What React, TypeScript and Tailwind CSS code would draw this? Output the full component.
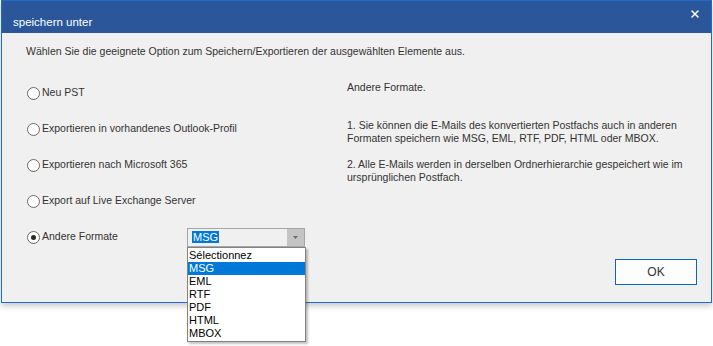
import { X } from 'lucide-react'

const options = [
  { label: 'Neu PST', checked: false },
  { label: 'Exportieren in vorhandenes Outlook-Profil', checked: false },
  { label: 'Exportieren nach Microsoft 365', checked: false },
  { label: 'Export auf Live Exchange Server', checked: false },
]

const formats = ['Sélectionnez', 'MSG', 'EML', 'RTF', 'PDF', 'HTML', 'MBOX']

function Radio({ checked }: { checked: boolean }) {
  return (
    <span className="flex h-[13px] w-[13px] shrink-0 items-center justify-center rounded-full border border-[#6a6a6a] bg-white">
      {checked && <span className="h-[5px] w-[5px] rounded-full bg-[#2a2a2a]" />}
    </span>
  )
}

function RadioRow({ label, checked }: { label: string; checked: boolean }) {
  return (
    <div className="flex h-[36px] items-center gap-[2px]">
      <Radio checked={checked} />
      <span>{label}</span>
    </div>
  )
}

function FormatCombo() {
  return (
    <div className="relative">
      {/* Closed combo */}
      <div className="flex h-[19px] w-[118px] items-center border border-[#a6a6a6] bg-[#f0f0f0]">
        <div className="flex-1 pl-[4px] text-[11px]">
          <span className="bg-[#0078d7] px-px text-white">MSG</span>
        </div>
        <div className="flex h-[17px] w-[17px] items-center justify-center bg-[#c4c4c4]">
          <svg width="5" height="3" viewBox="0 0 5 3">
            <path d="M0 0 L5 0 L2.5 3 Z" fill="#6a6a6a" />
          </svg>
        </div>
      </div>

      {/* Open list */}
      <div className="absolute left-0 top-full z-10 w-[119px] border border-[#828282] bg-white py-px shadow-[2px_2px_2px_rgba(0,0,0,0.25)]">
        {formats.map((f) => (
          <div
            key={f}
            className={
              f === 'MSG'
                ? 'h-[13px] bg-[#0078d7] pl-[1px] text-[11px] leading-[13px] text-white'
                : 'h-[13px] pl-[1px] text-[11px] leading-[13px] text-black'
            }
          >
            {f}
          </div>
        ))}
      </div>
    </div>
  )
}

export default function App() {
  return (
    <div className="h-[346px] w-[713px] bg-white font-['Liberation_Sans',Arial,sans-serif] text-[10.5px] text-[#333333]">
      <div className="ml-px flex h-[303px] w-[711px] flex-col border border-[#1f6bc9] bg-[#f0f0f0] shadow-[0_3px_6px_rgba(0,0,0,0.22)]">
        {/* Title bar */}
        <div className="flex h-[32px] items-start justify-between bg-[#2b579a] pl-[11px] pr-[10px]">
          <span className="pt-[14px] text-[11.5px] leading-[14px] text-white">speichern unter</span>
          <X className="mt-[7px] h-[12px] w-[12px] text-white" strokeWidth={3} />
        </div>

        {/* Body */}
        <div className="flex flex-1 flex-col">
          <p className="mt-[11px] pl-[24px] leading-[14px]">
            Wählen Sie die geeignete Option zum Speichern/Exportieren der ausgewählten Elemente aus.
          </p>

          <div className="mt-[17px] flex">
            <div className="w-[345px] pl-[25px]">
              {options.map((o) => (
                <RadioRow key={o.label} label={o.label} checked={o.checked} />
              ))}
              <div className="flex h-[36px] items-center">
                <div className="flex w-[160px] items-center gap-[2px]">
                  <Radio checked />
                  <span>Andere Formate</span>
                </div>
                <FormatCombo />
              </div>
            </div>

            <div className="flex flex-col leading-[13px]">
              <p className="mt-[6px]">Andere Formate.</p>
              <p className="mt-[25px]">
                <span className="block">1. Sie können die E-Mails des konvertierten Postfachs auch in anderen</span>
                <span className="block">Formaten speichern wie MSG, EML, RTF, PDF, HTML oder MBOX.</span>
              </p>
              <p className="mt-[13px]">
                <span className="block">2. Alle E-Mails werden in derselben Ordnerhierarchie gespeichert wie im</span>
                <span className="block">ursprünglichen Postfach.</span>
              </p>
            </div>
          </div>

          <div className="mt-auto flex justify-end pb-[17px] pr-[14px]">
            <button className="h-[26px] w-[82px] border border-[#0a64c8] bg-[#fdfdfd] text-[12px] text-[#333333]">
              OK
            </button>
          </div>
        </div>
      </div>
    </div>
  )
}
